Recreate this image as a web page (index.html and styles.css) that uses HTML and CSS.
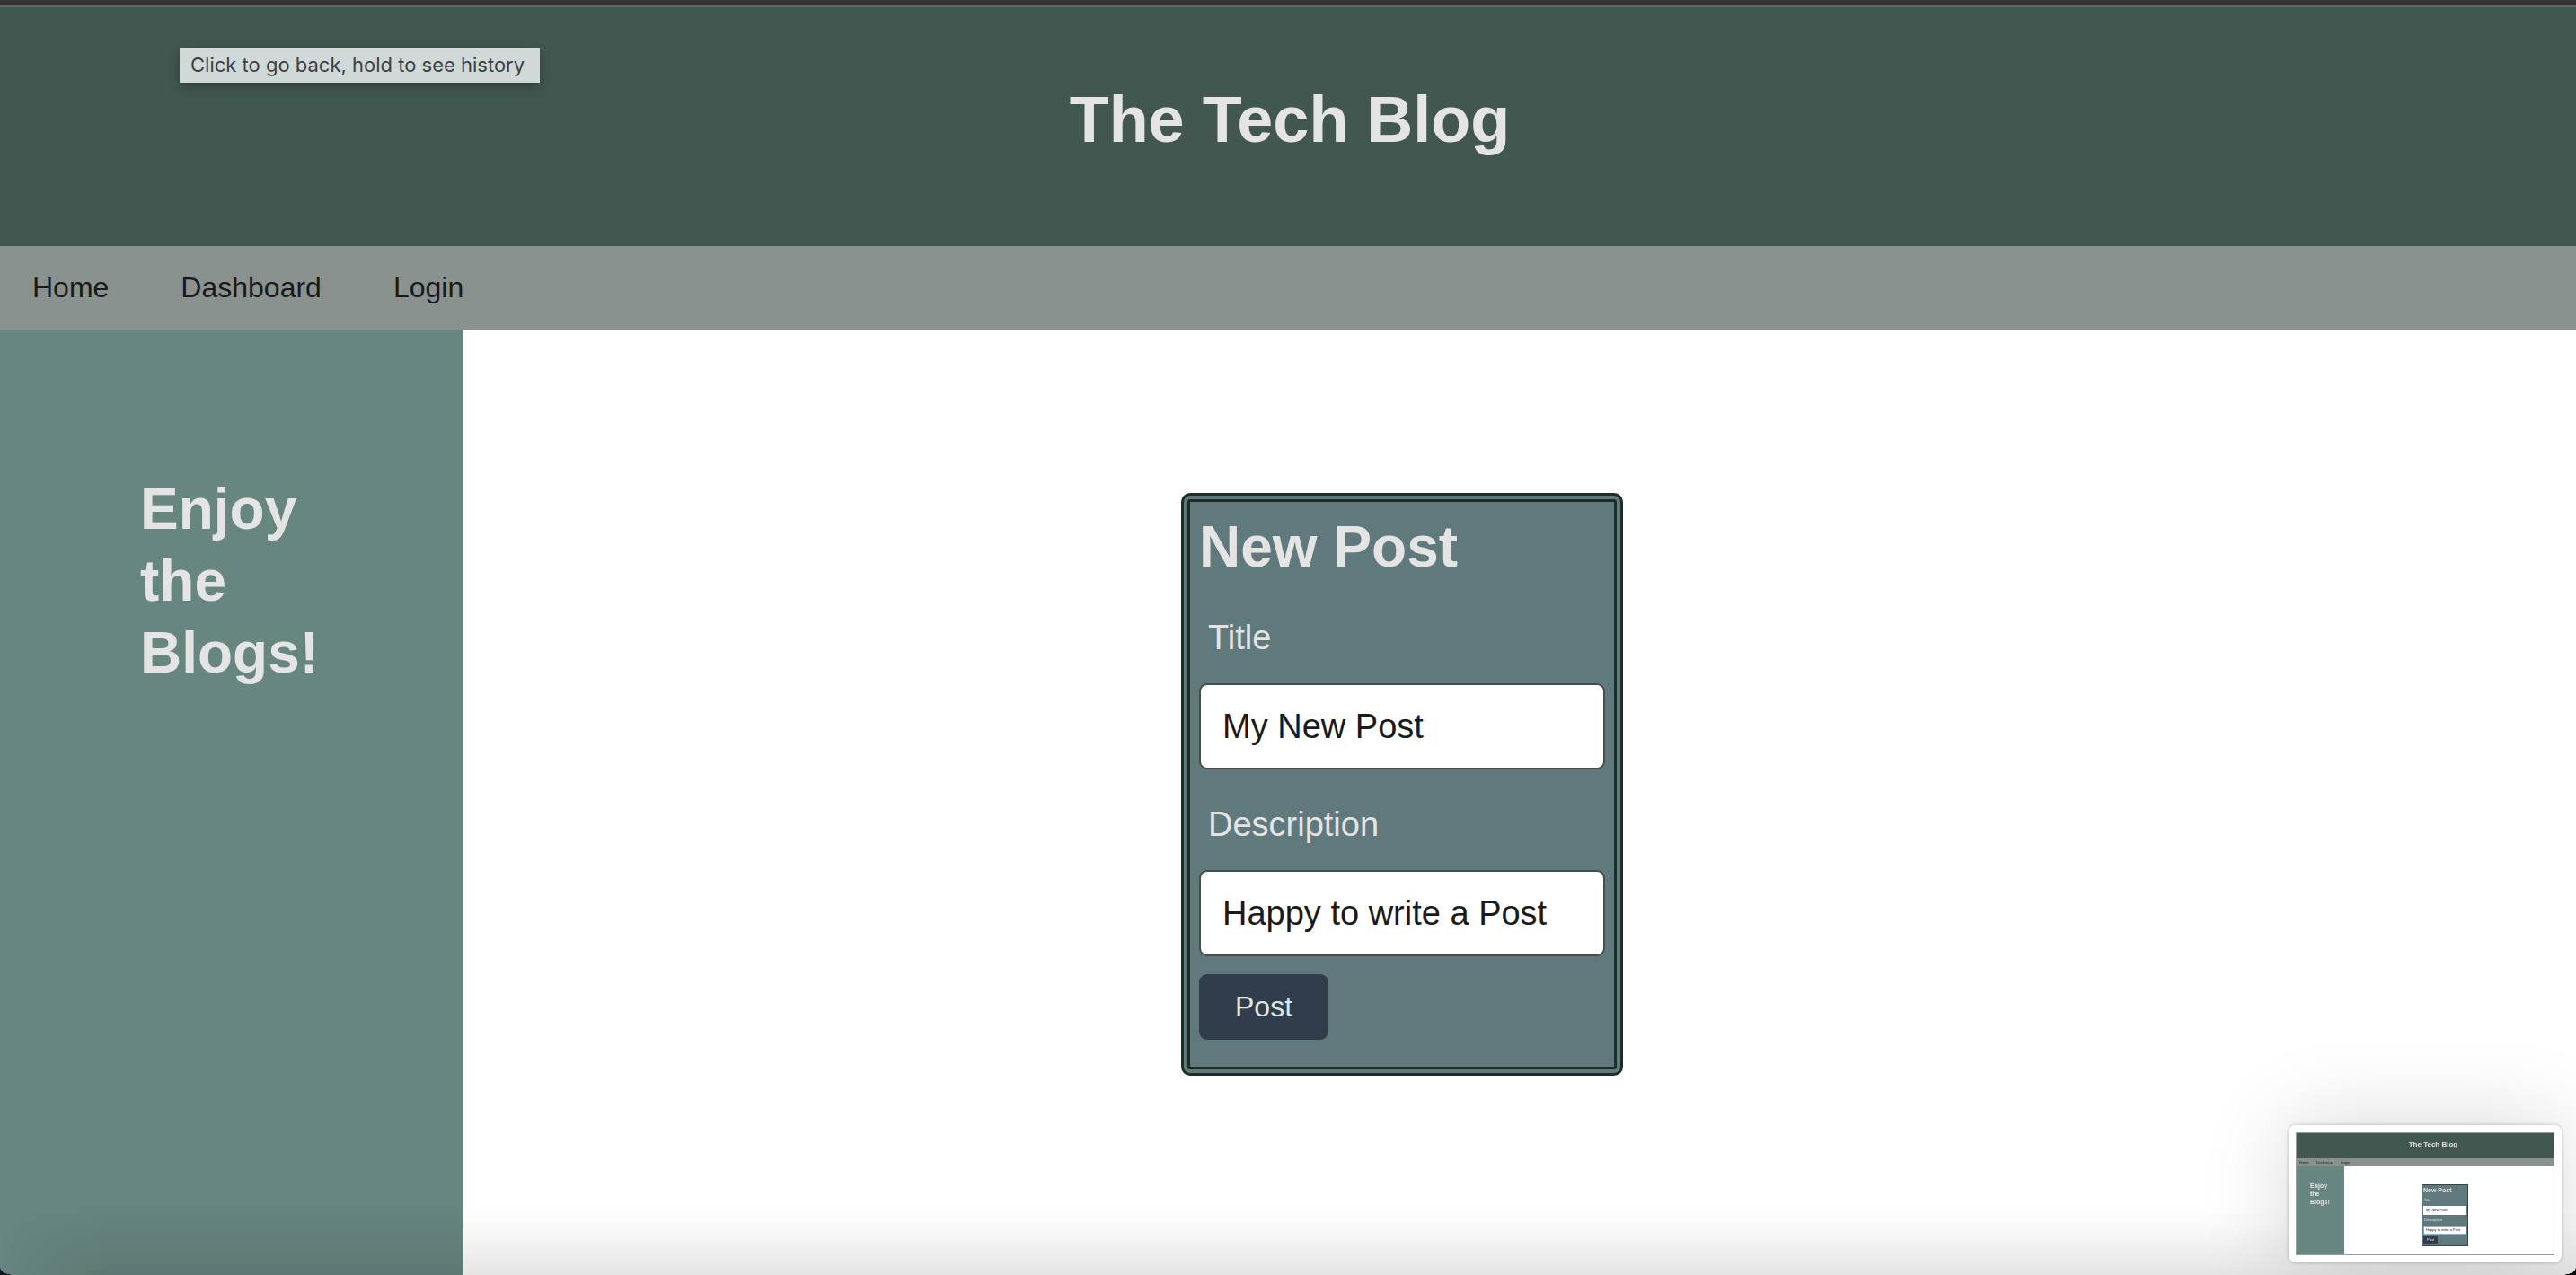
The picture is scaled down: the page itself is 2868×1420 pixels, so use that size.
FILE: index.html
```html
<!DOCTYPE html>
<html lang="en">
<head>
<meta charset="utf-8">
<title>The Tech Blog</title>
<link rel="stylesheet" href="styles.css">
</head>
<body>
<header class="site-header">
  <h1 class="site-title">The Tech Blog</h1>
</header>
<nav class="site-nav">
  <a href="#">Home</a>
  <a href="#">Dashboard</a>
  <a href="#">Login</a>
</nav>
<div class="layout">
  <aside class="sidebar">
    <h2 class="heading">Enjoy the Blogs!</h2>
  </aside>
  <main class="content">
    <form class="card">
      <h2 class="heading">New Post</h2>
      <label class="label" for="title">Title</label>
      <input class="field" id="title" type="text" value="My New Post">
      <label class="label" for="description">Description</label>
      <input class="field" id="description" type="text" value="Happy to write a Post">
      <button class="button" type="button">Post</button>
    </form>
  </main>
</div>
<div class="tooltip" role="tooltip">Click to go back, hold to see history</div>
<div class="dock-shade"></div>
<div class="corner corner-left"></div>
<div class="corner corner-right"></div>
<div class="preview">
  <div class="mini">
    <div class="mini-header">The Tech Blog</div>
    <div class="mini-nav"><span>Home</span><span>Dashboard</span><span>Login</span></div>
    <div class="mini-layout">
      <div class="mini-sidebar">Enjoy the Blogs!</div>
      <div class="mini-content">
        <div class="mini-card">
          <div class="mini-heading">New Post</div>
          <div class="mini-label">Title</div>
          <div class="mini-field">My New Post</div>
          <div class="mini-label">Description</div>
          <div class="mini-field mini-focus">Happy to write a Post</div>
          <div class="mini-button">Post</div>
        </div>
      </div>
    </div>
  </div>
</div>
</body>
</html>
```
FILE: styles.css
```css
* {
  box-sizing: border-box;
}

body {
  display: flex;
  flex-direction: column;
  min-height: 100vh;
  margin: 0;
  background: #fff;
  color: #1a1a1a;
  font-family: "Liberation Sans", Arial, sans-serif;
  font-size: 32px;
}

h1,
h2 {
  margin: 0;
}

.site-header {
  height: 274px;
  padding: 85px 0 0 4px;
  border-top: 6px solid #353435;
  box-shadow: inset 0 2px #656062;
  background: #435751;
  text-align: center;
}

.site-title {
  color: #e4e4e4;
  font-size: 72px;
  line-height: 84px;
}

.site-nav {
  display: flex;
  align-items: center;
  gap: 80px;
  height: 93px;
  padding: 0 36px;
  background: #89928e;
}

.site-nav a {
  color: #1a1a1a;
  text-decoration: none;
}

.layout {
  display: flex;
  flex: 1;
}

.sidebar {
  flex: 0 0 515px;
  padding: 160px 156px;
  background: #67867f;
}

.heading {
  color: #e4e4e4;
  font-size: 64px;
  line-height: 80px;
}

.content {
  flex: 1;
  padding: 182px 0 182px 800px;
}

.card {
  display: flex;
  flex-direction: column;
  align-items: flex-start;
  width: 492px;
  padding: 10px 10px 30px;
  border: 10px double #1f2d28;
  border-radius: 10px;
  background: #5f797c;
}

.label {
  padding: 34px 10px 24px;
  color: #e4e4e4;
  font-size: 38px;
  line-height: 54px;
}

.field {
  width: 100%;
  height: 96px;
  padding: 0 24px;
  border: 2px solid #4b4b4b;
  border-radius: 9px;
  background: #fff;
  color: #1a1a1a;
  font-family: inherit;
  font-size: 38px;
}

.button {
  width: 144px;
  height: 73px;
  margin-top: 20px;
  padding: 0;
  border: 0;
  border-radius: 9px;
  background: #313d4d;
  color: #dce8e8;
  font-family: inherit;
  font-size: 32px;
}

.tooltip {
  position: absolute;
  top: 54px;
  left: 200px;
  padding: 0 17px 2px 12px;
  background: #d1d9d8;
  box-shadow: 0 4px 14px rgba(0, 0, 0, 0.3);
  color: #3c4142;
  font-family: Inter, sans-serif;
  font-size: 22px;
  line-height: 36px;
}

.dock-shade {
  position: fixed;
  right: 0;
  bottom: 0;
  left: 0;
  height: 80px;
  background: linear-gradient(to bottom, rgba(0, 0, 0, 0), rgba(0, 0, 0, 0.02) 30%, rgba(0, 0, 0, 0.1));
  mask-image: linear-gradient(to right, transparent, #000 120px);
}

.corner {
  position: fixed;
  bottom: 0;
  width: 16px;
  height: 8px;
}

.corner-left {
  left: 0;
  background: radial-gradient(ellipse 16px 8px at 100% 0, transparent 96%, #0a1620);
}

.corner-right {
  right: 0;
  background: radial-gradient(ellipse 16px 8px at 0 0, transparent 96%, #000);
}

.preview {
  position: fixed;
  right: 16px;
  bottom: 14px;
  width: 304px;
  padding: 8px;
  border-radius: 8px;
  background: #fff;
  box-shadow: 0 0 4px rgba(0, 0, 0, 0.25), 0 0 100px rgba(0, 0, 0, 0.16);
}

.mini {
  height: 137px;
  border: 1px solid #9b9b9b;
  font-size: 4px;
  color: #1a1a1a;
}

.mini-header {
  height: 28px;
  padding-left: 18px;
  background: #435751;
  color: #e4e4e4;
  font-size: 8px;
  font-weight: bold;
  line-height: 26px;
  text-align: center;
}

.mini-nav {
  display: flex;
  gap: 8px;
  padding-left: 3px;
  background: #89928e;
  line-height: 9px;
}

.mini-layout {
  display: flex;
  height: 98px;
}

.mini-sidebar {
  width: 53px;
  padding: 17px 15px;
  background: #67867f;
  color: #e4e4e4;
  font-size: 7px;
  font-weight: bold;
  line-height: 9px;
}

.mini-content {
  padding: 20px 0 0 86px;
}

.mini-card {
  width: 52px;
  height: 69px;
  padding: 1px;
  border: 1px solid #344841;
  background: #5f797c;
  color: #e4e4e4;
}

.mini-heading {
  font-size: 7px;
  font-weight: bold;
  line-height: 10px;
}

.mini-label {
  padding-left: 1px;
  line-height: 12px;
}

.mini-field {
  height: 10px;
  padding-left: 3px;
  background: #fff;
  color: #1a1a1a;
  line-height: 10px;
}

.mini-focus {
  box-shadow: inset 0 0 0 1px #8fa9d6;
}

.mini-button {
  width: 16px;
  height: 8px;
  margin-top: 2px;
  background: #313d4d;
  line-height: 8px;
  text-align: center;
}
```
